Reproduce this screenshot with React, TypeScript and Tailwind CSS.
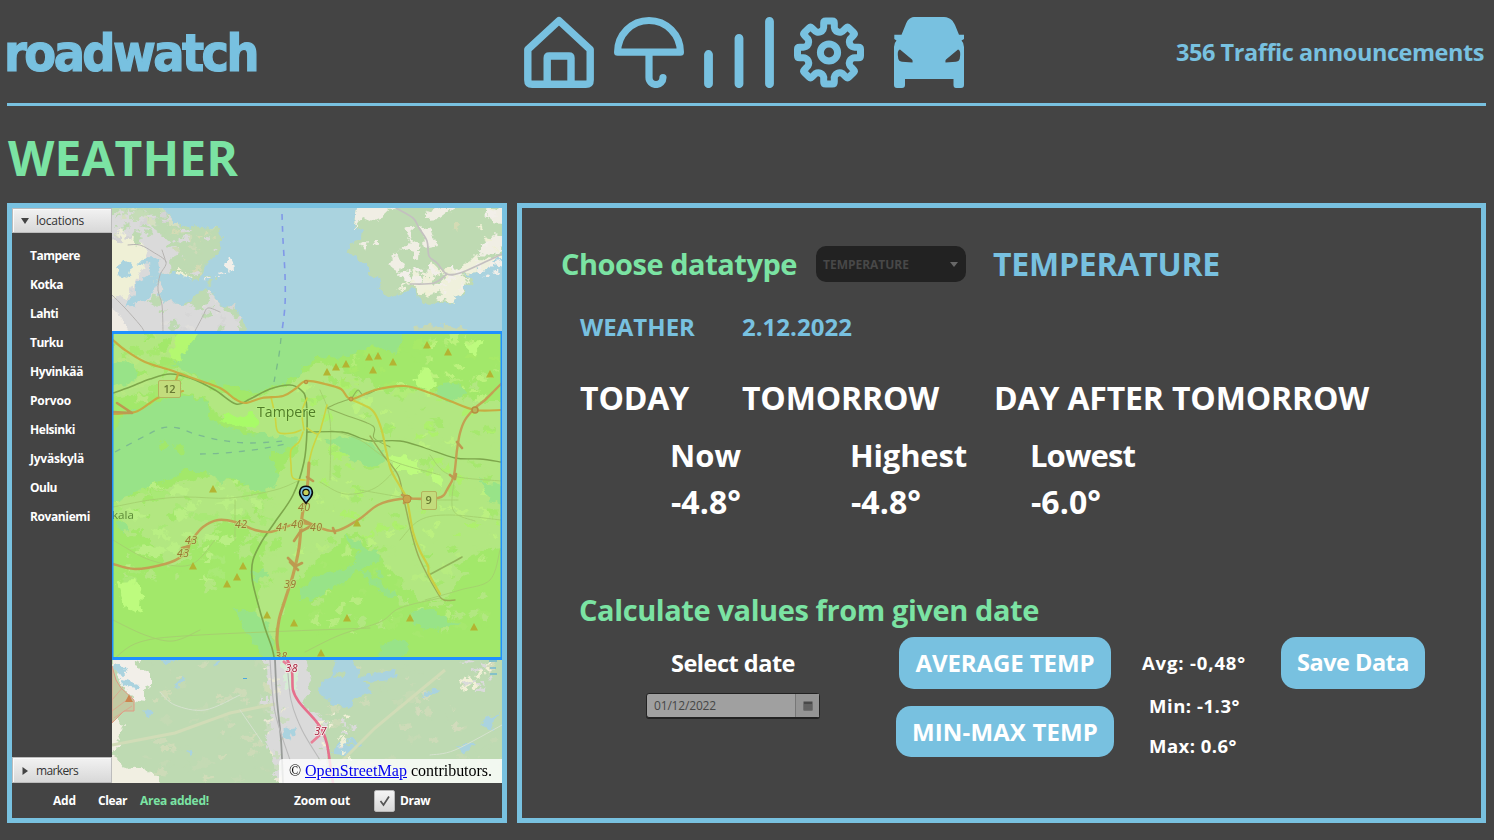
import { useLayoutEffect, useRef, useState } from "react";

const BLUE = "#78c1e0";

/* A single line of text whose tracking is tuned so that it fills `w` pixels. */
function Fit({ children, w, className = "" }: { children: string; w: number; className?: string }) {
  const ref = useRef<HTMLSpanElement>(null);
  const [ls, setLs] = useState(0);
  useLayoutEffect(() => {
    if (ref.current) {
      const natural = ref.current.getBoundingClientRect().width;
      setLs((w - natural) / children.length);
    }
  }, []);
  return (
    <span ref={ref} style={{ letterSpacing: ls }} className={"inline-block shrink-0 whitespace-pre " + className}>
      {children}
    </span>
  );
}

const tooth = (i: number) => {
  const a = (i * Math.PI) / 4;
  const p = (x: number, y: number) =>
    `${(x * Math.cos(a) - y * Math.sin(a)).toFixed(2)} ${(x * Math.sin(a) + y * Math.cos(a)).toFixed(2)}`;
  return { a: p(-5.3, -26.5), b: p(-5.3, -29.5), c: p(-3.3, -31.5), c0: p(-5.3, -31.5), d: p(3.3, -31.5), e: p(5.3, -29.5), e0: p(5.3, -31.5), f: p(5.3, -26.5) };
};
const gearPath =
  Array.from({ length: 8 }, (_, i) => {
    const t = tooth(i);
    const n = tooth(i + 1);
    return `${i === 0 ? "M" + t.a : ""}L${t.b}Q${t.c0} ${t.c}L${t.d}Q${t.e0} ${t.e}L${t.f}A5.4 5.4 0 0 0 ${n.a}`;
  }).join("") + "Z";

function NavIcons() {
  return (
    <nav className="flex h-[72px] w-[442px] shrink-0">
      <svg className="w-[90px]" viewBox="523 16 90 72" fill="none" stroke={BLUE} strokeWidth="7.4" strokeLinejoin="round">
        <path d="M527.8 49.500L559 20.600L590.200 49.500V80q0 4.300-4.300 4.300H532.100q-4.300 0-4.300-4.300Z" />
        <path d="M547.200 84V58q0-2 2-2H569q2 0 2 2V84" />
      </svg>
      <svg className="w-[90px]" viewBox="613 16 90 72" fill="none" stroke={BLUE} strokeWidth="7.2" strokeLinejoin="round" strokeLinecap="round">
        <path d="M617.600 52.200A31.400 31.700 0 0 1 680.400 52.200Z" />
        <path d="M649 54V77.500a7 7 0 0 0 14 0" />
      </svg>
      <svg className="w-[90px]" viewBox="703 16 90 72" fill="none" stroke={BLUE} strokeWidth="8.8" strokeLinecap="round">
        <path d="M708.500 54.500V83.700M739 38.300V83.700M769.500 21.400V83.700" />
      </svg>
      <svg className="w-[90px]" viewBox="793 16 90 72" fill="none" stroke={BLUE} strokeWidth="7" strokeLinejoin="round">
        <g transform="translate(829 52.500)">
          <path d={gearPath} />
          <circle r="8.600" />
        </g>
      </svg>
      <svg className="w-[82px]" viewBox="883 16 82 72" fill={BLUE} fillRule="evenodd">
        <path d="M914 17H944C951 17.500 953 21 955 25L959 34.700H964V39L961.500 40.500Q964 43 964 47V85Q964 88 961 88H956Q953.500 88 953.500 85V79H905V85Q905 88 902 88H897Q894 88 894 85V47Q894 43 896.500 40.500L894.300 39V34.700H901.500L905.500 25C907 21 909 17.500 914 17ZM900 49.500Q897.500 50 897.800 55L898.300 59Q899 61.500 902 61.800L912.500 62.500Q913 60.500 912 59.500ZM958 49.500L946 59.500Q945 60.500 945.500 62.500L956 61.800Q959 61.500 959.700 59L960.200 55Q960.500 50 958 49.500Z" />
      </svg>
    </nav>
  );
}

/* Small irregular patches that give the land its texture. */
function Patches({ seed, n, x, y, w, h, colors, size }: { seed: number; n: number; x: number; y: number; w: number; h: number; colors: string[]; size: number }) {
  let s = seed;
  const r = () => {
    s = (s * 16807) % 2147483647;
    return s / 2147483647;
  };
  return (
    <g>
      {Array.from({ length: n }, (_, i) => {
        const cx = x + r() * w;
        const cy = y + r() * h;
        const sz = size * (0.4 + r());
        const pts = Array.from({ length: 9 }, (_, k) => {
          const a = (k / 9) * Math.PI * 2;
          const q = sz * (0.35 + r() * 0.9);
          return `${(cx + Math.cos(a) * q * 1.2).toFixed(1)},${(cy + Math.sin(a) * q * 0.8).toFixed(1)}`;
        }).join(" ");
        return <polygon key={i} points={pts} fill={colors[i % colors.length]} />;
      })}
    </g>
  );
}

/* Turns a polyline path (M, L, H, V and implicit points) into smooth curves. */
function smooth(d: string) {
  return d
    .split("M")
    .filter(Boolean)
    .map((part) => {
      const pts: [number, number][] = [];
      for (const m of ("L" + part).matchAll(/([LHV])([^LHV]*)/g)) {
        const v = m[2].trim().split(/[ ,]+/).map(Number);
        const last = pts[pts.length - 1];
        if (m[1] === "H") pts.push([v[0], last[1]]);
        else if (m[1] === "V") pts.push([last[0], v[0]]);
        else pts.push([v[0], v[1]]);
      }
      let out = `M${pts[0]}`;
      for (let i = 0; i < pts.length - 1; i++) {
        const p0 = pts[i - 1] ?? pts[i];
        const p1 = pts[i];
        const p2 = pts[i + 1];
        const p3 = pts[i + 2] ?? p2;
        const c1 = [p1[0] + (p2[0] - p0[0]) / 6, p1[1] + (p2[1] - p0[1]) / 6];
        const c2 = [p2[0] - (p3[0] - p1[0]) / 6, p2[1] - (p3[1] - p1[1]) / 6];
        out += `C${c1} ${c2} ${p2}`;
      }
      return out;
    })
    .join("");
}

function Road({ d, c, w = 1, dash }: { d: string; c: string; w?: number; dash?: string }) {
  return <path d={smooth(d)} fill="none" stroke={c} strokeWidth={w} strokeDasharray={dash} strokeLinejoin="round" strokeLinecap={dash ? "butt" : "round"} />;
}

const peaks = [
  [327, 372], [336, 367], [346, 364], [369, 357], [378, 356], [373, 370], [393, 362], [427, 345], [448, 352], [490, 374],
  [213, 489], [193, 566], [227, 584], [237, 577], [243, 566], [267, 615], [294, 623], [357, 523], [347, 618], [410, 618], [474, 627], [321, 653],
];
const exits: [string, number, number][] = [
  ["40", 298, 511], ["42", 235, 528], ["41", 276, 531], ["40", 291, 528], ["40", 310, 531], ["43", 185, 544], ["43", 177, 557], ["39", 284, 588], ["38", 275, 660],
];

function MapView() {
  return (
    <svg className="block h-[575px] w-[390px]" viewBox="112 208 390 575">
      <defs>
        <filter id="ragged" filterUnits="userSpaceOnUse" x="90" y="190" width="430" height="610">
          <feTurbulence type="fractalNoise" baseFrequency="0.12" numOctaves="3" seed="4" />
          <feDisplacementMap in="SourceGraphic" scale="11" xChannelSelector="R" yChannelSelector="G" />
        </filter>
        <clipPath id="area"><rect x="112" y="332" width="390" height="327" /></clipPath>
        <clipPath id="west"><path d="M100 198H158L165 214L172 222L180 225L190 227L200 228L212 227L221 230L222 240L220 250L214 258L207 262L205 272L198 281L190 282L184 276L172 272L160 275L152 277L160 285L158 295L162 303L175 302L185 305L195 295L205 288L213 292L216 300L225 308L233 305L240 315L247 327L240 340H100Z" /></clipPath>
        <clipPath id="north"><path d="M358 198L356 216L353 225L360 229L362 236L347 248L352 255L368 266L368 275L377 280L380 290L392 298L402 292L415 290L420 300L430 305L437 302L455 304L452 297L465 292L462 286L472 284L474 278L464 276L475 270L485 268L495 260L512 250V198Z" /></clipPath>
        <clipPath id="south"><rect x="112" y="660" width="390" height="123" /></clipPath>
      </defs>
      <rect x="112" y="208" width="390" height="575" fill="#aad3df" />

      <g filter="url(#ragged)">
        <g clipPath="url(#west)">
          <rect x="100" y="198" width="152" height="144" fill="#bedab2" />
          <path d="M118 208L140 214L150 224L165 232L178 246L170 262L172 300L200 310L214 294L225 312L240 318L236 340H100V225Z" fill="#dadada" />
          <path d="M108 245L122 228L135 236L150 252L146 262L136 280L128 299L108 294ZM178 268L190 270L200 262L190 283L178 278Z" fill="#eff0d6" />
          <path d="M150 200L176 224L222 229L220 252L205 262L192 280L172 262L182 252L166 238L150 226Z" fill="#bedab2" />
          <Patches seed={31} n={55} x={112} y={205} w={66} h={34} size={5} colors={["#bedab2", "#dadada", "#c4dcb6", "#d5dfc0", "#d4d4d4", "#bedab2"]} />
          <Patches seed={57} n={40} x={172} y={226} w={48} h={50} size={4} colors={["#dadada", "#cddbb8", "#bedab2", "#d4dbb4"]} />
          <Patches seed={17} n={46} x={155} y={290} w={90} h={40} size={4} colors={["#bedab2", "#dadada", "#dfdedb", "#d6d6d6"]} />
          <path d="M116 269L123 260L132 265L130 276L122 279ZM139 262L152 256L159 260L161 276L156 288L147 300L136 306L126 308L133 296L135 284L151 274L150 266Z" fill="#aad3df" />
          <path d="M160 276L175 273L200 284L190 304L172 303L159 296Z" fill="#aad3df" />
          <path d="M108 305L118 312L132 334H108Z" fill="#f0ece4" />
        </g>
        <Patches seed={71} n={9} x={202} y={263} w={20} h={20} size={2} colors={["#bedab2", "#eeeae5"]} />
        <path d="M223 263L229 257L233 262L234 270L228 272Z" fill="#f2efe9" />
        <g clipPath="url(#north)">
          <rect x="345" y="198" width="170" height="120" fill="#bedab2" />
          <path d="M358 200H402L385 216L372 222L362 218L353 230ZM405 228L412 226L411 240L422 246L415 252L402 248L394 255L404 262L400 273L388 264L395 254L410 240ZM418 224L432 232L437 246L427 248ZM412 250L419 252L418 260L411 257ZM360 244L368 242L365 251ZM374 240L380 240V248L375 246ZM484 244L492 234L508 236V248L490 254L480 256ZM424 213L444 206H456L440 218L428 219ZM486 214L500 206H510V224L494 222Z" fill="#f0eee4" />
          <path d="M394 292L408 284L416 270L428 273L433 262L446 276L470 260L478 252L482 262L502 252L512 262L470 277L462 290L455 304L436 299L442 292L425 297L412 285Z" fill="#eff0dc" />
          <Patches seed={91} n={34} x={405} y={268} w={70} h={28} size={4} colors={["#f2efe9", "#eff0d6", "#bedab2", "#f2efe9"]} />
          <Patches seed={45} n={9} x={478} y={208} w={26} h={58} size={4} colors={["#f2efe9", "#eff0d6"]} />
          <path d="M454 220L460 223L459 230L454 228Z" fill="#d4dbb4" />
        </g>
        <Patches seed={131} n={8} x={480} y={262} w={22} h={22} size={3} colors={["#f2efe9"]} />
        <path d="M409 336L413 327L438 325L458 327L480 336Z" fill="#c6d8b5" />
      </g>
      <Road d="M112 295L125 308L140 325L144 331M128 245L140 245L153 252L166 262L160 275L158 290L162 305L163 331M166 262L162 250M195 331L203 316L208 308L220 312" c="#b5b3b1" w={1} />
      <Road d="M396 208L413 218L419 228L427 241L429 256L437 263L447 274L460 273L485 262L502 254M447 274L434 283L410 284" c="#c4c0c0" w={1.7} />
      <Road d="M282 214L283 240L285 275L285 305L282 331" c="#8098e8" w={1.6} dash="6 6" />

      <g clipPath="url(#area)">
        <g filter="url(#ragged)">
          <rect x="100" y="325" width="412" height="340" fill="#a2e86a" />
          <path d="M100 325H205L184 345L178 366L210 388L240 402L290 384L306 372L320 362L350 373L390 392L440 390L480 402H512V545L470 553L448 600L420 602L375 550L355 530L330 550L305 570L288 590L275 640L255 625L266 540L225 520L205 540L170 570L150 540L100 510L150 490L210 475L265 492L300 445L250 430L215 412L205 398L170 389L100 400Z" fill="#b2e781" />
          <Patches seed={2021} n={110} x={112} y={480} w={170} h={110} size={6} colors={["#a2e86a", "#b2e781", "#a9e976", "#b9ef84"]} />
          <Patches seed={881} n={170} x={300} y={385} w={200} h={170} size={5} colors={["#b2e781", "#a6e86e", "#bbf080", "#b2e781", "#adf06c"]} />
          <Patches seed={61} n={60} x={325} y={335} w={175} h={60} size={5} colors={["#a2e86a", "#b2ec78", "#bbf27d", "#a7ea68"]} />
          <Patches seed={309} n={80} x={315} y={545} w={170} h={90} size={5} colors={["#b2e781", "#a2e86a", "#b7ec80", "#a6e86e"]} />
          <Patches seed={77} n={50} x={112} y={335} w={72} h={65} size={6} colors={["#b8e882", "#a2e86a", "#a6e86e"]} />
          <path d="M208 325L190 342L184 352L177 361L173 366L190 373L205 382L224 384L245 390L258 393L268 388L281 384L290 379L303 375L300 368L310 365L316 356L325 359L335 357L350 355L358 350L380 348L395 352L403 344L406 325Z" fill="#98e388" />
          <path d="M180 325H208L190 345L178 362L170 358Z" fill="#b4f870" />
          <path d="M105 367L120 361L134 362L139 373L131 383L105 389Z" fill="#98e388" />
          <path d="M105 445L125 413L152 405L176 394L198 398L210 405L208 416L225 429L244 433L270 434L297 439L286 452L270 452L276 470L278 484L265 491L252 489L235 479L221 481L205 473L187 469L176 477L155 483L137 492L105 507Z" fill="#98e388" />
          <path d="M218 420L230 412L238 418L250 412L260 425L242 428Z" fill="#a8fb68" />
          <path d="M158 443L164 439L168 446L160 449ZM174 447L181 444L186 451L176 454Z" fill="#a2e86a" />
          <path d="M325 440L340 435L360 440L385 452L386 458L372 468L352 460Z" fill="#98e388" />
          <path d="M300 590L320 575L352 565L360 548L380 550L378 560L362 570L340 585L320 595L300 600ZM345 536L358 540L362 550L350 546ZM360 568L380 582L398 598L390 598L370 583ZM375 575L385 580L380 570Z" fill="#98e388" />
          <path d="M232 608L250 612L268 622L276 660H266L252 640ZM384 643L405 638L410 650L390 665H376ZM408 616L430 608L445 618L462 624L440 630L420 628ZM252 573L262 568L268 575L256 583ZM480 480L510 490V510L490 500ZM434 386L455 382L468 394L450 402L438 396ZM117 523L126 520L130 530L120 534Z" fill="#98e388" />
          <path d="M116 583L135 582L142 595L140 615L125 608ZM388 455L418 460L420 475L395 468ZM412 380L425 368L436 383L428 392ZM430 470L442 478L444 488L432 480ZM465 345L485 340L475 356Z" fill="#bdfb7e" />
        </g>

        <Road d="M113 507L150 500L185 497L230 498L275 490L300 480M320 482L345 494L375 488L400 465M330 430L360 440L390 460L440 475M360 490L420 500L440 500L458 500M400 540L420 520L450 515L501 520M425 600L460 590L490 580L500 550M113 540L150 560L190 565L215 540M430 455L450 475L501 481M235 500L235 520L235 540M320 390L330 420L330 480M455 475L453 510L475 521" c="#a4d06e" w={0.9} />
        <Road d="M113 620L145 635L173 641L200 630M305 652L340 635L380 622L400 608L440 598M113 660L140 642L200 635L370 628" c="#a6d070" w={1} />
        <Road d="M113 393L130 387L150 379L170 374L190 378L215 390L236 404L250 399L270 389L290 385L301 390L306 400L307 430L304 462L293 495L275 522L262 541L253 560L252 578L257 600L265 628L272 648L275 662" c="#7da64b" w={1.6} />
        <Road d="M307 432H342L360 438L372 441L400 441L425 448L455 458L480 459L501 462" c="#7da64b" w={1.3} />
        <Road d="M327 408L345 415L373 426L374 438L390 447M350 399L338 403L327 408M352 398L358 390L364 395L380 388" c="#8fb45a" w={1.1} />
        <Road d="M370 436L383 455L398 475L404 500L412 535L420 560L437 592L444 600L455 600" c="#9aae56" w={1.4} />
        <Road d="M429 575L455 561L462 557" c="#91b45a" w={1.6} />
        <Road d="M271 397L275 415L278 432L292 433L301 430M307 428L318 434L322 424L327 405M303 432L299 442L291 450L291 465L293 478L305 480M318 434L312 450L308 467M307 398L302 412L304 430" c="#cdd440" w={1.6} />
        <Road d="M350 399L372 410L381 428L386 450L391 470L401 488L407 500L413 532L420 551L428 566L429 574L440 594" c="#cbcf42" w={2.2} />
        <Road d="M113 340L125 350L145 362L170 370L195 379L220 388L235 399L245 403L262 398L283 396L295 389L306 381L325 384L341 389L351 399L375 390L405 386L430 393L450 401L475 410H501M113 414L135 412L150 403L160 397L183 391M178 374L176 380" c="#c7ac42" w={2.2} />
        <Road d="M113 564L135 569L165 564L182 556L192 540L203 527L218 520L235 522L255 530L270 532L285 527L300 523L312 525L335 531L358 520L378 505L400 499L438 498L448 488L454 475L457 450L460 433L465 420L475 408L485 400L495 390L501 384" c="#c3a053" w={2.4} />
        <Road d="M309 463L307 490L302 517L299 548L293 575L285 600L279 620L277 640L280 660" c="#c3a053" w={3.1} />
        <path d="M113 412L132 413L117 403M303 520L313 525L300 532L294 541M288 558L296 566L302 563M290 562L298 570M307 477L313 481M402 495L411 498L404 503M450 475L455 479L456 474M457 442L462 448M333 528L335 533M182 548L189 546L187 552" fill="none" stroke="#bd9a50" strokeWidth="2.600" strokeLinecap="round" strokeLinejoin="round" />
        <Road d="M115 452L145 436L162 428L178 428L195 434L220 440L250 443L285 441M200 454L225 453L260 449L285 444" c="#7cba91" w={1.3} dash="6 7" />
        <Road d="M281 338L279 355L274 382" c="#78b989" w={1.3} dash="6 7" />
        <g fill="#c9a54c" stroke="#b68e3f" strokeWidth="1">
          <circle cx="475" cy="410" r="3" fill="#b9b45a" strokeWidth="1.500" />
          <circle cx="351" cy="399" r="2" />
          <circle cx="407" cy="499" r="4" />
          <circle cx="306" cy="382" r="1.800" />
        </g>
        {peaks.map(([x, y], i) => (
          <path key={i} d={`M${x} ${y - 4}L${x + 4} ${y + 3.500}H${x - 4}Z`} fill="#b3b432" />
        ))}
        <rect x="158.500" y="380.500" width="22" height="17" rx="1.500" fill="#c2dc7c" stroke="#b3b45d" />
        <rect x="421.500" y="491.500" width="15" height="18" rx="1.500" fill="#c2dc7c" stroke="#b3b45d" />
        <g fontFamily="'Open Sans', sans-serif" fill="#687a34">
          <text x="163.500" y="393" fontSize="11" fontWeight="600" textLength="12">12</text>
          <text x="425.500" y="504" fontSize="11" fontWeight="600">9</text>
          <text x="257" y="416.500" fontSize="14" textLength="59" lengthAdjust="spacingAndGlyphs" stroke="#b9ee83" strokeWidth="1.500" paintOrder="stroke" fill="#4f7c28">Tampere</text>
          <text x="112" y="518.500" fontSize="11.500" textLength="22" lengthAdjust="spacingAndGlyphs" fill="#5c8936">kala</text>
        </g>
        <g fontFamily="'Noto Sans', sans-serif" fontStyle="italic" fontSize="10.500" fill="#997a35" stroke="#b9e27b" strokeWidth="1.500" paintOrder="stroke">
          {exits.map(([t, x, y], i) => (
            <text key={i} x={x} y={y} textLength="12">{t}</text>
          ))}
        </g>
      </g>

      <g clipPath="url(#south)">
        <g filter="url(#ragged)">
          <rect x="100" y="650" width="412" height="145" fill="#bedab2" />
          <Patches seed={404} n={55} x={145} y={660} w={130} h={123} size={5} colors={["#d0dcb8", "#c4dab4", "#bedab2", "#cddbb8"]} />
          <Patches seed={505} n={55} x={330} y={660} w={172} h={123} size={5} colors={["#cddbb8", "#bedab2", "#c5dab4", "#d2dbbc"]} />
          <path d="M105 752L118 758L126 770L140 768L156 776L164 790H105ZM105 724L118 718L124 726L116 740L122 744L112 752L105 748Z" fill="#f1efe2" />
          <path d="M112 652H144L137 668L151 674V688L142 692L146 702L132 700L121 682Z" fill="#f2efe9" />
          <path d="M113 663L124 668L126 675L120 674ZM123 679L137 684L136 688L124 685ZM146 708L152 712L150 717L144 710ZM173 686L184 676L180 684ZM158 658H180L168 665ZM212 663L220 660L216 666ZM186 754L193 750L192 757Z" fill="#aad3df" />
          <path d="M265 650H305L312 690L302 705L325 720L326 744L330 790H285L265 745L272 720Z" fill="#dadada" />
          <path d="M280 660L298 668L298 690L288 690Z" fill="#d6ecd5" />
          <path d="M319 684L333 674L338 655L352 660L360 675L398 670L395 679L365 681L372 693L356 696L350 709L332 705L320 693ZM286 728L296 726L290 741L281 737ZM337 742L352 740L360 746L345 755L332 754ZM420 694L434 689L440 690L427 697ZM455 743L475 745L465 754ZM480 723L500 712L490 730Z" fill="#aad3df" />
          <path d="M333 676L344 670L342 678Z" fill="#bedab2" />
          <Patches seed={76} n={45} x={320} y={713} w={35} h={65} size={3} colors={["#f1f0d7", "#dadada", "#bedab2"]} />
          <Patches seed={90} n={38} x={462} y={662} w={28} h={30} size={3} colors={["#f1f0d7", "#dadada", "#bedab2"]} />
          <Patches seed={33} n={30} x={266} y={662} w={18} h={120} size={4} colors={["#dadada", "#e9e7d4", "#cbdcc0"]} />
        </g>
        <path d="M112 666L116 680L121 688L134 700V711H124L112 723Z" fill="#c3c9a2" stroke="#df9a83" strokeWidth="1" />
        <path d="M112 700L123 687M112 711L132 696M114 718L132 706" stroke="#dda28c" strokeWidth=".8" />
        <path d="M112 745L175 733L230 713L275 704" fill="none" stroke="#d1dcb7" strokeWidth="3" />
        <path d="M333 770L375 728L445 670" fill="none" stroke="#d1dcb7" strokeWidth="3" />
        <Road d="M275 660L277 700L281 740L283 783" c="#989b98" w={1.8} />
        <Road d="M287 660L291 700L302 730L320 760M270 660L275 712L290 760" c="#bababa" w={1.1} />
        <Road d="M160 692L175 705L205 710L240 695M240 710L262 742M430 755L455 750L502 725" c="#d6e2cf" />
        <Road d="M287 659L292 672L293 690L299 702L315 720L322 730L327 744L331 770L333 783" c="#e66f8c" w={2.6} />
        <path d="M283 661L290 667M317 725L324 729M321 734L311 743" stroke="#e88198" strokeWidth="2.600" />
        <path d="M129 694.500L133 702H125Z" fill="#cc8550" />
        <path d="M489 661H497M490 668H496M490 674H497M243 678.500H247" stroke="#4ba8df" strokeWidth="1" />
        <g fontFamily="'Noto Sans', sans-serif" fontStyle="italic" fontSize="10.500" fill="#a8233e" stroke="#f4e9e9" strokeWidth="1.800" paintOrder="stroke">
          <text x="285.500" y="672" textLength="12">38</text>
          <text x="314.500" y="735" textLength="12">37</text>
        </g>
      </g>

      <path d="M112 332.500H502M112 658.500H502" stroke="#1e90ff" strokeWidth="3" />
      <path d="M112.700 332V659M501.300 332V659" stroke="#1e90ff" strokeWidth="1.600" />

      <path d="M306 503.300L301.300 497.200C297.800 492.500 300 486.300 306 486.300S314.200 492.500 310.700 497.200Z" fill={BLUE} stroke="#0a0a0a" strokeWidth="1.500" />
      <circle cx="306" cy="492.500" r="3.200" fill="#c8d25a" stroke="#0a0a0a" strokeWidth="1.200" />
    </svg>
  );
}

const places: [string, number][] = [
  ["Tampere", 50], ["Kotka", 33], ["Lahti", 28], ["Turku", 33], ["Hyvinkää", 53], ["Porvoo", 41], ["Helsinki", 45], ["Jyväskylä", 54], ["Oulu", 27], ["Rovaniemi", 60],
];

function PaneTitle({ label, w, open }: { label: string; w: number; open?: boolean }) {
  return (
    <div className={(open ? "h-[25px] pt-px" : "h-[26px] pt-[2px]") + " flex w-[100px] items-center border border-[#bcbcbc] bg-linear-to-b from-[#f2f2f2] to-[#d8d8d8] pl-2 shadow-[inset_1px_1px_0_#fafafa]"}>
      <svg className="mr-[7px] h-2 w-2" viewBox="0 0 8 8" fill="#444">
        <path d={open ? "M0 1H8L4 7Z" : "M1.500 0V8L7 4Z"} />
      </svg>
      <Fit w={w} className="text-[12px] leading-6 text-[#333]">{label}</Fit>
    </div>
  );
}

function LocationPanel() {
  return (
    <section className="flex h-[620px] w-[500px] flex-col border-5 border-[#78c1e0]">
      <div className="flex h-[575px]">
        <aside className="flex w-[100px] flex-col justify-between">
          <div>
            <PaneTitle label="locations" w={48} open />
            <ul className="pt-[8px] pl-[18px]">
              {places.map(([p, w]) => (
                <li key={p} className="flex h-[29px] items-center">
                  <Fit w={w} className="text-[12px] font-bold text-white">{p}</Fit>
                </li>
              ))}
            </ul>
          </div>
          <PaneTitle label="markers" w={42} />
        </aside>
        <div className="relative">
          <MapView />
          <div className="absolute right-0 bottom-0 flex h-6 w-[223px] items-center rounded-tl-[4px] bg-white/80 pl-[10px] font-['Liberation_Serif',serif] text-[16px] text-black">
            <Fit w={16}>© </Fit>
            <Fit w={102} className="text-[#0000ee] underline">OpenStreetMap</Fit>
            <Fit w={85}> contributors.</Fit>
          </div>
        </div>
      </div>
      <div className="flex h-[35px] items-center text-[12px] font-bold text-white">
        <span className="w-[45px] pl-[41px]"><Fit w={23}>Add</Fit></span>
        <span className="w-[41px] pl-[41px]"><Fit w={29}>Clear</Fit></span>
        <span className="w-[196px] pl-[42px] text-[#7be3a3]"><Fit w={69}>Area added!</Fit></span>
        <span className="w-[80px]"><Fit w={56}>Zoom out</Fit></span>
        <span className="mr-[5px] flex h-[22px] w-[21px] items-center justify-center rounded-[2px] border border-[#b8b8b8] bg-linear-to-b from-[#f4f4f4] to-[#d8d8d8]">
          <svg className="h-3 w-3" viewBox="0 0 12 12" fill="none" stroke="#555" strokeWidth="1.700"><path d="M1.500 6L4.500 10L10 1.500" /></svg>
        </span>
        <Fit w={30}>Draw</Fit>
      </div>
    </section>
  );
}

function DataPanel() {
  return (
    <section className="flex h-[620px] w-[969px] flex-col border-5 border-[#78c1e0] font-bold text-white">
      <div className="mt-[38px] flex h-[36px] items-center pl-[39px]">
        <span className="flex w-[255px]"><Fit w={236} className="pb-px text-[29px] leading-[35px] text-[#7be3a3]">Choose datatype</Fit></span>
        <div className="mr-[27px] flex h-9 w-[150px] items-center justify-between rounded-[10px] bg-[#222] pr-2 pl-[7px] text-[12px] text-[#484848]">
          <Fit w={86} className="pt-[2px]">TEMPERATURE</Fit>
          <svg className="h-[5px] w-2" viewBox="0 0 8 5" fill="#686868"><path d="M0 0H8L4 5Z" /></svg>
        </div>
        <Fit w={227} className="text-[32px] leading-9 text-[#78c1e0]">TEMPERATURE</Fit>
      </div>
      <div className="mt-[27px] flex h-9 items-center pl-[58px] text-[24px] leading-9 text-[#78c1e0]">
        <span className="flex w-[162px]"><Fit w={115}>WEATHER</Fit></span>
        <Fit w={110}>2.12.2022</Fit>
      </div>
      <div className="mt-[31px] flex h-11 items-center pl-[58px] text-[32px] leading-11">
        <span className="flex w-[162px]"><Fit w={109}>TODAY</Fit></span>
        <span className="flex w-[252px]"><Fit w={197}>TOMORROW</Fit></span>
        <Fit w={375}>DAY AFTER TOMORROW</Fit>
      </div>
      <div className="mt-[13px] flex h-11 items-center pl-[148px] text-[31px] leading-11">
        <span className="flex w-[180px]"><Fit w={71}>Now</Fit></span>
        <span className="flex w-[180px]"><Fit w={117}>Highest</Fit></span>
        <Fit w={105}>Lowest</Fit>
      </div>
      <div className="mt-[3px] flex h-11 items-center pl-[149px] text-[32px] leading-11">
        <span className="flex w-[180px]"><Fit w={70}>-4.8°</Fit></span>
        <span className="flex w-[180px]"><Fit w={70}>-4.8°</Fit></span>
        <Fit w={70}>-6.0°</Fit>
      </div>
      <div className="mt-[64px] flex h-11 items-center pl-[57px] text-[29px] leading-11 text-[#7be3a3]">
        <Fit w={460}>Calculate values from given date</Fit>
      </div>
      <div className="mt-[5px] flex h-[121px] items-start pl-[124px]">
        <div className="flex w-[246px] flex-col">
          <div className="flex h-[52px] items-center pl-[25px]"><Fit w={124} className="text-[23.500px] leading-[50px]">Select date</Fit></div>
          <div className="mt-[4px] flex h-[25px] w-[174px] rounded-[3px] border border-[#222] bg-[#a0a0a0] text-[12px] font-normal text-[#464646] shadow-[0_1px_0_#222]">
            <div className="flex w-[148px] items-center pl-[7px]"><Fit w={62}>01/12/2022</Fit></div>
            <div className="flex flex-1 items-center justify-center border-l border-[#777] bg-[#959595]">
              <svg className="h-[10px] w-[10px]" viewBox="0 0 10 10"><path d="M.5.5H9.500V9.500H.5Z" fill="#484848" /><path d="M1.500 4H9M1.500 6H9M1.500 8H9" stroke="#aaa" strokeDasharray="1 1" /></svg>
            </div>
          </div>
        </div>
        <div className="flex w-[229px] flex-col pl-[4px] text-[24px]">
          <button className="ml-[3px] flex h-[52px] w-[212px] items-center justify-center rounded-[15px] bg-[#78c1e0]"><Fit w={179}>AVERAGE TEMP</Fit></button>
          <button className="mt-[17px] flex h-[51px] w-[218px] items-center justify-center rounded-[15px] bg-[#78c1e0]"><Fit w={186}>MIN-MAX TEMP</Fit></button>
        </div>
        <div className="flex w-[160px] flex-col pl-[21px] text-[18.500px]">
          <div className="flex h-[52px] items-center"><Fit w={104}>Avg: -0,48°</Fit></div>
          <div className="flex h-[34px] items-center pl-[7px]"><Fit w={91}>Min: -1.3°</Fit></div>
          <div className="mt-[6px] flex h-[34px] items-center pl-[7px]"><Fit w={88}>Max: 0.6°</Fit></div>
        </div>
        <button className="flex h-[52px] w-[144px] items-center justify-center rounded-[15px] bg-[#78c1e0] text-[23.500px]"><Fit w={112}>Save Data</Fit></button>
      </div>
    </section>
  );
}

export default function App() {
  return (
    <div className="flex h-[840px] w-[1494px] flex-col overflow-hidden bg-[#444] font-['Open_Sans','Noto_Sans',sans-serif]">
      <header className="mr-[8px] ml-[7px] flex h-[106px] items-start border-b-3 border-[#78c1e0] pt-4 pr-[2px]">
        <div className="flex h-[72px] w-[516px] items-center text-[#78c1e0]">
          <Fit w={253} className="-ml-[3px] pt-[2px] font-['DejaVu_Sans_Condensed','DejaVu_Sans',sans-serif] text-[51.500px] leading-[72px] font-bold [-webkit-text-stroke:1.2px_#78c1e0] [font-stretch:condensed]">roadwatch</Fit>
        </div>
        <NavIcons />
        <div className="flex h-[72px] flex-1 items-center justify-end pt-[2px] text-[23.500px] font-bold text-[#78c1e0]">
          <Fit w={308}>356 Traffic announcements</Fit>
        </div>
      </header>
      <h1 className="mt-[20px] ml-[8px] flex h-[64px] items-center text-[48px] leading-[64px] font-bold text-[#7be3a3]">
        <Fit w={230}>WEATHER</Fit>
      </h1>
      <main className="mt-[13px] flex gap-[10px] pl-[7px]">
        <LocationPanel />
        <DataPanel />
      </main>
    </div>
  );
}
